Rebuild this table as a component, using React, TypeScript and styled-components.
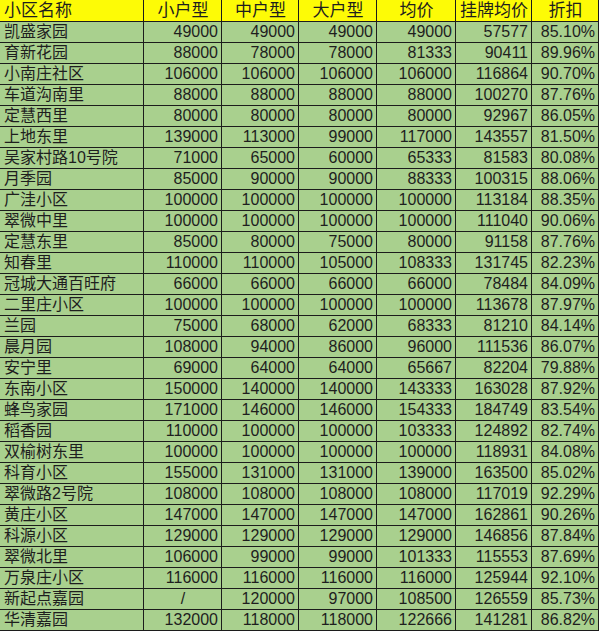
import React from 'react';
import styled, { createGlobalStyle } from 'styled-components';

const GlobalStyle = createGlobalStyle`
  html, body {
    margin: 0;
    padding: 0;
    background: #ffffff;
  }
`;

const rows: string[][] = [
  ['凯盛家园', '49000', '49000', '49000', '49000', '57577', '85.10%'],
  ['育新花园', '88000', '78000', '78000', '81333', '90411', '89.96%'],
  ['小南庄社区', '106000', '106000', '106000', '106000', '116864', '90.70%'],
  ['车道沟南里', '88000', '88000', '88000', '88000', '100270', '87.76%'],
  ['定慧西里', '80000', '80000', '80000', '80000', '92967', '86.05%'],
  ['上地东里', '139000', '113000', '99000', '117000', '143557', '81.50%'],
  ['吴家村路10号院', '71000', '65000', '60000', '65333', '81583', '80.08%'],
  ['月季园', '85000', '90000', '90000', '88333', '100315', '88.06%'],
  ['广洼小区', '100000', '100000', '100000', '100000', '113184', '88.35%'],
  ['翠微中里', '100000', '100000', '100000', '100000', '111040', '90.06%'],
  ['定慧东里', '85000', '80000', '75000', '80000', '91158', '87.76%'],
  ['知春里', '110000', '110000', '105000', '108333', '131745', '82.23%'],
  ['冠城大通百旺府', '66000', '66000', '66000', '66000', '78484', '84.09%'],
  ['二里庄小区', '100000', '100000', '100000', '100000', '113678', '87.97%'],
  ['兰园', '75000', '68000', '62000', '68333', '81210', '84.14%'],
  ['晨月园', '108000', '94000', '86000', '96000', '111536', '86.07%'],
  ['安宁里', '69000', '64000', '64000', '65667', '82204', '79.88%'],
  ['东南小区', '150000', '140000', '140000', '143333', '163028', '87.92%'],
  ['蜂鸟家园', '171000', '146000', '146000', '154333', '184749', '83.54%'],
  ['稻香园', '110000', '100000', '100000', '103333', '124892', '82.74%'],
  ['双榆树东里', '100000', '100000', '100000', '100000', '118931', '84.08%'],
  ['科育小区', '155000', '131000', '131000', '139000', '163500', '85.02%'],
  ['翠微路2号院', '108000', '108000', '108000', '108000', '117019', '92.29%'],
  ['黄庄小区', '147000', '147000', '147000', '147000', '162861', '90.26%'],
  ['科源小区', '129000', '129000', '129000', '129000', '146856', '87.84%'],
  ['翠微北里', '106000', '99000', '99000', '101333', '115553', '87.69%'],
  ['万泉庄小区', '116000', '116000', '116000', '116000', '125944', '92.10%'],
  ['新起点嘉园', '/', '120000', '97000', '108500', '126559', '85.73%'],
  ['华清嘉园', '132000', '118000', '118000', '122666', '141281', '86.82%'],
];

const headers = ['小区名称', '小户型', '中户型', '大户型', '均价', '挂牌均价', '折扣'];

const Sheet = styled.div`
  display: grid;
  grid-template-columns: 143px 77px 76px 77px 78px 75px 66px;
  grid-template-rows: 21px;
  grid-auto-rows: 20px;
  gap: 1px;
  width: max-content;
  background: #1c1c1c;
  border-right: 1px solid #1c1c1c;
  border-bottom: 1px solid #1c1c1c;
  font-family: "Liberation Sans", "Noto Sans CJK SC", sans-serif;
  font-size: 16px;
  color: #1e1e1e;
`;

const Cell = styled.div<{ $head?: boolean; $align: 'left' | 'right' | 'center' }>`
  display: flex;
  align-items: center;
  justify-content: ${p =>
    p.$align === 'left' ? 'flex-start' : p.$align === 'right' ? 'flex-end' : 'center'};
  padding: 0 3px 0 4px;
  background: ${p => (p.$head ? '#fdfb06' : '#a9d08e')};
  font-size: ${p => (p.$head ? '17px' : '16px')};
  line-height: 1;
  white-space: nowrap;
  overflow: hidden;
`;

export default function App() {
  return (
    <>
      <GlobalStyle />
      <Sheet>
        {headers.map((h, i) => (
          <Cell key={h} $head $align={i === 0 ? 'left' : 'center'}>
            {h}
          </Cell>
        ))}
        {rows.map(r =>
          r.map((v, i) => (
            <Cell
              key={r[0] + i}
              $align={i === 0 ? 'left' : v === '/' ? 'center' : 'right'}
            >
              {v}
            </Cell>
          ))
        )}
      </Sheet>
    </>
  );
}
